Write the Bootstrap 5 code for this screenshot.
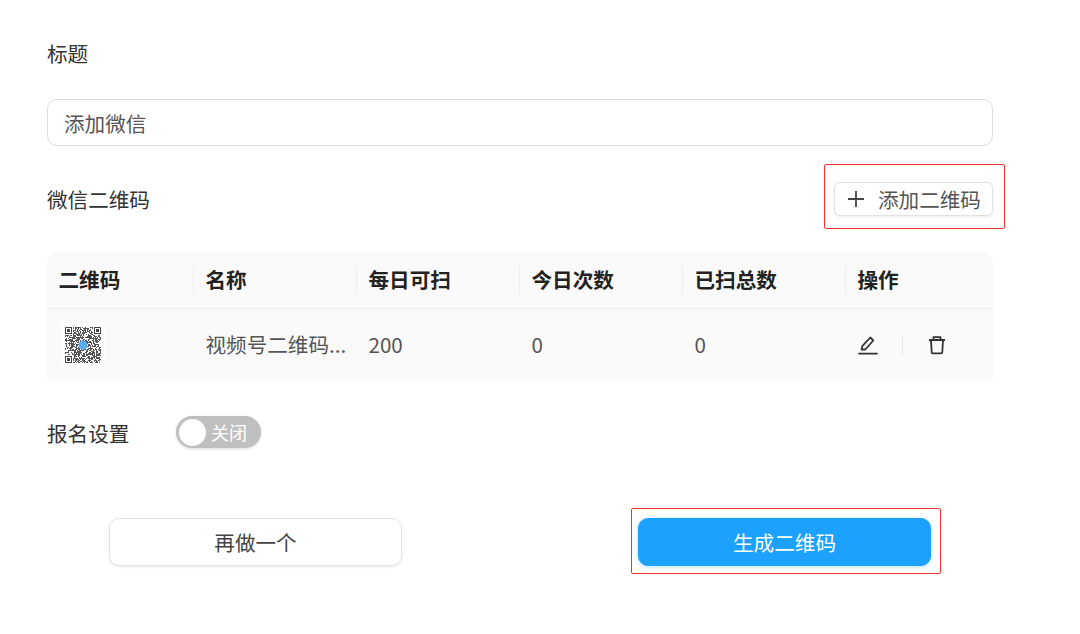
<!DOCTYPE html>
<html lang="zh-CN">

<head>
    <meta charset="UTF-8" />
    <meta name="viewport" content="width=device-width, initial-scale=1.0" />
    <title>添加微信</title>
    <link href="https://cdn.jsdelivr.net/npm/bootstrap@5.3.0/dist/css/bootstrap.min.css" rel="stylesheet">
    <script src="https://cdn.jsdelivr.net/npm/bootstrap@5.3.0/dist/js/bootstrap.bundle.min.js"></script>

    <style>
        html, body {
            height: 634px;
            overflow: hidden;
        }

        body {
            font-family: "Noto Sans CJK SC", "Liberation Sans", sans-serif;
            font-size: 20.6px;
            color: #333;
            background: #fff;
        }

        .page-wrap {
            width: 946px;
            margin-left: 47px;
            padding-top: 38px;
        }

        .field-label {
            line-height: 30px;
            color: #333;
        }

        .title-input.form-control {
            height: 47px;
            margin-top: 31px;
            padding: 0 16px;
            font-size: 20.6px;
            color: #555;
            border-color: #dcdcdc;
            border-radius: 10px;
        }

        .qr-head {
            height: 36px;
            margin-top: 35px;
        }

        .marked {
            position: relative;
        }

        .marked::after {
            content: "";
            position: absolute;
            border: 1px solid #f5322d;
            border-radius: 2px;
            pointer-events: none;
        }

        .marked-add::after {
            inset: -18px -12px -13px -10px;
        }

        .marked-save::after {
            inset: -10px -10px -8px -7px;
        }

        .add-btn.btn {
            display: flex;
            align-items: center;
            gap: 13px;
            width: 159px;
            height: 34px;
            padding: 0 0 0 12px;
            font-size: 20.6px;
            line-height: 1;
            color: #555;
            background: #fff;
            border: 1px solid #e2e2e2;
            border-radius: 6px;
            box-shadow: 0 1px 3px rgba(0, 0, 0, .08);
        }

        .qr-table-wrap {
            margin-top: 35px;
            background: #fafafa;
            border-radius: 12px 12px 0 0;
            overflow: hidden;
        }

        .qr-table.table {
            table-layout: fixed;
            margin: 0;
            --bs-table-bg: transparent;
            --bs-table-border-color: #efefef;
        }

        .qr-table th {
            position: relative;
            height: 56px;
            padding: 0 0 0 12.5px;
            font-size: 20.6px;
            font-weight: 700;
            color: #222;
            vertical-align: middle;
        }

        .qr-table th:first-child {
            padding-left: 11.5px;
        }

        .qr-table th + th::before {
            content: "";
            position: absolute;
            left: 0;
            top: 13px;
            bottom: 13px;
            border-left: 1px solid #eee;
        }

        .qr-table td {
            height: 73px;
            padding: 0 0 0 12.5px;
            color: #555;
            vertical-align: middle;
            border-bottom: 0;
            white-space: nowrap;
        }

        .qr-thumb {
            display: block;
            width: 44px;
            height: 44px;
            margin-left: 1px;
            padding: 4px;
            background: #fff;
            border-radius: 5px;
        }

        .op-sep {
            width: 1px;
            height: 20px;
            margin: 0 24px 0 24px;
            background: #e8e8e8;
        }

        .signup-row {
            margin-top: 35px;
            height: 32px;
        }

        .signup-row .field-label {
            position: relative;
            top: 1px;
        }

        .toggle-off {
            display: flex;
            align-items: center;
            width: 85px;
            height: 32px;
            margin-left: 46.6px;
            padding: 0 3px;
            font-size: 18px;
            color: #fff;
            background: #bfbfbf;
            border-radius: 16px;
            box-shadow: 0 1px 3px rgba(0, 0, 0, .15);
        }

        .toggle-knob {
            width: 27px;
            height: 27px;
            margin-right: 5px;
            background: #fff;
            border-radius: 50%;
        }

        .foot-row {
            margin-top: 70px;
            padding-left: 62px;
            gap: 236px;
        }

        .foot-btn.btn {
            width: 293px;
            height: 48px;
            padding: 0;
            font-size: 20.6px;
            border-radius: 10px;
        }

        .foot-light.btn {
            color: #444;
            background: #fff;
            border: 1px solid #e2e2e2;
            box-shadow: 0 1px 3px rgba(0, 0, 0, .08);
        }

        .foot-primary.btn {
            color: #fff;
            background: #1ca1ff;
            border: 1px solid #1ca1ff;
            box-shadow: 0 1px 4px rgba(28, 161, 255, .35);
        }
    </style>
</head>

<body>
    <div class="page-wrap">
        <div class="field-label">标题</div>
        <input type="text" class="form-control title-input" value="添加微信">

        <div class="qr-head d-flex justify-content-between align-items-center">
            <div class="field-label">微信二维码</div>
            <div class="marked marked-add">
                <button type="button" class="btn add-btn">
                    <svg width="18" height="18" viewBox="0 0 18 18" fill="none" stroke="#444" stroke-width="1.8">
                        <path d="M9 1v16M1 9h16" />
                    </svg>
                    <span>添加二维码</span>
                </button>
            </div>
        </div>

        <div class="qr-table-wrap">
            <table class="table qr-table">
                <colgroup>
                    <col style="width:146px">
                    <col style="width:163px">
                    <col style="width:163px">
                    <col style="width:163px">
                    <col style="width:163px">
                    <col style="width:148px">
                </colgroup>
                <thead>
                    <tr>
                        <th>二维码</th>
                        <th>名称</th>
                        <th>每日可扫</th>
                        <th>今日次数</th>
                        <th>已扫总数</th>
                        <th>操作</th>
                    </tr>
                </thead>
                <tbody>
                    <tr>
                        <td>
                            <svg class="qr-thumb" id="qrThumb" viewBox="0 0 36 36"></svg>
                        </td>
                        <td>视频号二维码...</td>
                        <td>200</td>
                        <td>0</td>
                        <td>0</td>
                        <td>
                            <div class="d-flex align-items-center">
                                <!-- pencil with baseline -->
                                <svg width="20" height="20" viewBox="0 0 20 20" fill="none" stroke="#333" stroke-width="1.8" stroke-linejoin="round">
                                    <path d="M3.5 14.5l.8-3.4L12.3 2.5l3 3-8 9z" />
                                    <path d="M1 18.6h18" stroke-linecap="round" />
                                </svg>
                                <div class="op-sep"></div>
                                <!-- trash can -->
                                <svg width="20" height="20" viewBox="0 0 20 20" fill="none" stroke="#333" stroke-width="1.8" stroke-linejoin="round">
                                    <path d="M2 5h16M6.5 5V2.2h7V5M4 5l.7 12.2a1.2 1.2 0 0 0 1.2 1.2h8.2a1.2 1.2 0 0 0 1.2-1.2L16 5" />
                                </svg>
                            </div>
                        </td>
                    </tr>
                </tbody>
            </table>
        </div>

        <div class="signup-row d-flex align-items-center">
            <div class="field-label">报名设置</div>
            <div class="toggle-off">
                <span class="toggle-knob"></span>
                <span>关闭</span>
            </div>
        </div>

        <div class="foot-row d-flex">
            <button type="button" class="btn foot-btn foot-light">再做一个</button>
            <div class="marked marked-save">
                <button type="button" class="btn foot-btn foot-primary">生成二维码</button>
            </div>
        </div>
    </div>

    <script>
        // fake QR modules, fixed seed so the picture stays the same
        const svg = document.getElementById("qrThumb");
        let seed = 7;
        let out = "";
        function rnd() {
            seed = (seed * 1103515245 + 12345) & 0x7fffffff;
            return (seed >> 16) / 32768;
        }
        function inFinder(x, y) {
            return (x < 8 && y < 8) || (x > 27 && y < 8) || (x < 8 && y > 27);
        }
        for (let y = 0; y < 36; y++) {
            for (let x = 0; x < 36; x++) {
                if (!inFinder(x, y) && rnd() > 0.42) {
                    out += `<rect x="${x}" y="${y}" width="1" height="1" fill="#555"/>`;
                }
            }
        }
        [[0, 0], [29, 0], [0, 29]].forEach(([x, y]) => {
            out += `<rect x="${x + .5}" y="${y + .5}" width="6" height="6" fill="#fff" stroke="#444"/>`;
            out += `<rect x="${x + 2}" y="${y + 2}" width="3" height="3" fill="#444"/>`;
        });
        out += `<circle cx="18" cy="18" r="4.5" fill="#5aaef5"/>`;
        svg.innerHTML = out;
    </script>
</body>

</html>
